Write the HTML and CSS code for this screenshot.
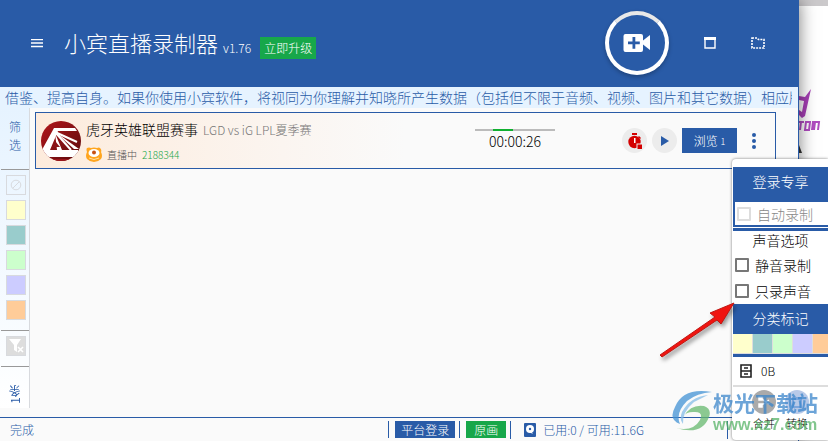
FILE: index.html
```html
<!DOCTYPE html>
<html lang="zh-CN">
<head>
<meta charset="utf-8">
<title>小宾直播录制器</title>
<link rel="stylesheet" href="styles.css">
</head>
<body>
<div class="desktop">
  <div class="window">
    <header class="header">
      <button class="icon-button" aria-label="菜单"><svg width="12" height="9" viewBox="0 0 12 9"><path d="M0 .5h12M0 4h12M0 7.500h12" stroke="#fff" stroke-width="1.500"/></svg></button>
      <h1 class="title">小宾直播录制器</h1>
      <span class="version">v1.76</span>
      <button class="upgrade">立即升级</button>
      <div class="window-tools">
        <button class="record" aria-label="添加录制"><svg width="28" height="20" viewBox="0 0 28 20"><path fill="#fff" fill-rule="evenodd" d="M2.500 1H18q2 0 2 2v4.500L27 2v15l-7-5.500V17q0 2-2 2H2.500q-2 0-2-2V3q0-2 2-2zM9.500 4v4.500H5v2.800h4.500v4.500h2.800v-4.500h4.500V8.500h-4.500V4z"/></svg></button>
        <button class="icon-button" aria-label="窗口"><svg width="12" height="12" viewBox="0 0 12 12"><path d="M1 1h10v10H1z" fill="none" stroke="#fff" stroke-width="1.400"/><path d="M0 0h12v3H0z" fill="#fff"/></svg></button>
        <button class="icon-button" aria-label="全屏"><svg width="14" height="12" viewBox="0 0 14 12"><path d="M1 1h5l1.500 1.500H13V11H1z" fill="none" stroke="#fff" stroke-width="1.600" stroke-dasharray="2 1"/></svg></button>
      </div>
    </header>
    <div class="notice"><p>借鉴、提高自身。如果你使用小宾软件，将视同为你理解并知晓所产生数据（包括但不限于音频、视频、图片和其它数据）相应版</p></div>
    <div class="content">
      <aside class="filters">
        <h2>筛<br>选</h2>
        <div class="filter-colors">
          <button class="swatch none" aria-label="无标记"><svg width="12" height="12" viewBox="0 0 12 12"><circle cx="6" cy="6" r="4.800"/><path d="M2.700 9.300l6.600-6.600"/></svg></button>
          <button class="swatch yellow" aria-label="黄色"></button>
          <button class="swatch teal" aria-label="青色"></button>
          <button class="swatch green" aria-label="绿色"></button>
          <button class="swatch violet" aria-label="紫色"></button>
          <button class="swatch orange" aria-label="橙色"></button>
        </div>
        <div class="filter-clear"><button class="swatch clear" aria-label="清除筛选"><svg width="16" height="16" viewBox="0 0 16 16"><path fill="#fff" d="M1 1h12L9 7v7l-3-2V7z"/><path d="M10 9l5 5m0-5l-5 5" stroke="#fff" stroke-width="1.600"/></svg></button></div>
        <span class="count">1条</span>
      </aside>
      <main class="streams">
        <article class="stream">
          <svg class="avatar" width="40" height="40" viewBox="0 0 40 40"><defs><clipPath id="round"><circle cx="20" cy="20" r="20"/></clipPath><linearGradient id="red" x2="1" y2="1"><stop stop-color="#b3161b"/><stop offset="1" stop-color="#5a0b0d"/></linearGradient></defs><g clip-path="url(#round)"><path d="M0 0h40v40H0z" fill="url(#red)"/><path d="M2 27L13 7h21l2 3H17L9 29h28v7H0v-6z" fill="#fff"/><path d="M13 10l25 18h-5zM14 12l7 17h-5z" fill="#fff"/><path d="M14 11l22 10M14 11l16 18" stroke="#fff" stroke-width="2"/><path d="M14 20l5 6h-7z" fill="#8a1418"/><path d="M10 38h20l-4 2H14z" fill="#9c151a"/></g></svg>
          <div class="stream-info">
            <p class="stream-name">虎牙英雄联盟赛事 <small>LGD vs iG LPL夏季赛</small></p>
            <p class="stream-state"><svg width="16" height="15" viewBox="0 0 16 15"><path d="M1 1q2-1 4 0 3-1 6 0 2-1 3 0 2 2 1 4 2 4 0 7-3 3-7 3T1 12Q-1 9 1 5 0 2 1 1z" fill="#ffa51f"/><ellipse cx="8" cy="6" rx="5.500" ry="4" fill="#fff"/><circle cx="8" cy="5.500" r="2" fill="#c75113"/><path d="M3 11q5 3 10 0" fill="none" stroke="#ffe0a0"/></svg><span>直播中</span><b>2188344</b></p>
          </div>
          <div class="timer"><div class="track"><i></i></div><time>00:00:26</time></div>
          <div class="stream-tools">
            <button class="round" aria-label="停止录制"><svg width="16" height="16" viewBox="0 0 16 16"><path d="M5 0h5v2H5z" fill="#d40000"/><circle cx="7.500" cy="9" r="6.200" fill="#d40000"/><path d="M12 3l2 2-1 1-2-2z" fill="#d40000"/><path d="M7 5h1.500v5H7z" fill="#fff"/><path d="M9.500 10.500H16V16H9.500z" fill="#ececec"/><path d="M10.500 11.500H15V16h-4.500z" fill="#d40000"/></svg></button>
            <button class="round" aria-label="播放"><svg width="8" height="10" viewBox="0 0 8 10"><path d="M0 0l8 5-8 5z" fill="#295ba7"/></svg></button>
            <button class="browse">浏览 <small>1</small></button>
            <button class="more" aria-label="更多"><svg width="4" height="16" viewBox="0 0 4 16"><g fill="#295ba7"><circle cx="2" cy="2" r="2"/><circle cx="2" cy="8" r="2"/><circle cx="2" cy="14" r="2"/></g></svg></button>
          </div>
        </article>
      </main>
    </div>
    <footer class="status">
      <span class="done">完成</span>
      <div class="status-cell"><button>平台登录</button></div>
      <div class="status-cell"><button class="quality">原画</button></div>
      <div class="status-cell disk"><svg width="12" height="14" viewBox="0 0 12 14"><rect width="12" height="14" rx="1" fill="#295ba7"/><circle cx="6" cy="6" r="4" fill="#fff"/><circle cx="6" cy="6" r="1.200" fill="#295ba7"/><path d="M6 7l3 4-4-2z" fill="#fff"/></svg><span>已用:0 / 可用:11.6G</span></div>
    </footer>
  </div>
  <div class="backdrop">
    <svg width="29" height="148" viewBox="0 6 29 148"><path d="M0 96l6 1 6-8-6 27-3 2-3-3v-5l3 2 2-11-5-1z" fill="#a63fb5"/><g fill="none" stroke="#b04cc0" stroke-width="2"><path d="M0 122h5m-3 0l-1 8M7 122h4l-1 8H6zM13 130l1-8h6l-1 8m-3-8l-1 8"/></g><path d="M0 145l3 8H0z" fill="#333"/></svg>
  </div>
</div>
<section class="menu">
  <h3>登录专享</h3>
  <label class="option locked"><input type="checkbox" disabled>自动录制</label>
  <h3 class="plain">声音选项</h3>
  <label class="option"><input type="checkbox">静音录制</label>
  <label class="option"><input type="checkbox">只录声音</label>
  <h3>分类标记</h3>
  <div class="palette"><button class="yellow" aria-label="黄色"></button><button class="teal" aria-label="青色"></button><button class="green" aria-label="绿色"></button><button class="violet" aria-label="紫色"></button><button class="orange" aria-label="橙色"></button></div>
  <div class="size"><svg width="12" height="14" viewBox="0 0 12 14"><path d="M1 1h10v12H1zM1 7h10M4 4h4M4 10h4" fill="none" stroke="#222" stroke-width="1.600"/></svg><span>0B</span></div>
  <div class="actions">
    <button><i><svg width="14" height="14" viewBox="0 0 14 14"><path d="M2 2h3v3H2zM2 9h3v3H2zM5 4l7 5M5 10l7-5" fill="#fff" stroke="#fff" stroke-width="1.500"/></svg></i>合并</button>
    <button><i class="convert"><svg width="14" height="14" viewBox="0 0 14 14"><path d="M3 4h8v8H3zM2 3h10" fill="none" stroke="#7ba5dc" stroke-width="2"/></svg></i>转换</button>
  </div>
</section>
<svg class="pointer" width="82" height="60" viewBox="0 0 82 60" aria-hidden="true"><path d="M1 53L56 15 51 11 75 1 62 22 58 18 3 55z" fill="#f01410" stroke="#bf1712"/></svg>
<div class="watermark">
  <svg width="42" height="44" viewBox="0 0 42 44"><path d="M42 3Q13-2 5 18-2 31 10 35 5 24 17 12 27 4 42 3z" fill="#4293d5"/><path d="M38 6Q20 8 12 23q-3 7 1 12-1-12 11-22z" fill="#85bde8"/><path d="M6 39q17 4 24-8 4-9-7-8-7 0-9 4 7-12 20-10 8 3 5 11-7 19-33 11z" fill="#67b96f"/></svg>
  <div><strong>极光下载站</strong><span>www.xz7.com</span></div>
</div>
</body>
</html>
```
FILE: styles.css
```css
* { box-sizing: border-box; }
body {
  margin: 0;
  overflow: hidden;
  font-family: "Noto Sans CJK SC", sans-serif;
  font-weight: 300;
  font-size: 14px;
  color: #000;
}
h1, h2, h3, p { margin: 0; font-weight: inherit; }
button { padding: 0; border: 0; background: none; font: inherit; color: inherit; }
svg { display: block; flex: none; }

.desktop { display: flex; height: 100vh; background: #fff; }
.window {
  position: relative;
  z-index: 1;
  flex: 1;
  min-width: 0;
  display: flex;
  flex-direction: column;
  background: #fafafa;
  border-right: 1px solid #295ba7;
  box-shadow: 0 0 16px #0008;
}
.backdrop { width: 29px; border-top: 6px solid #cbc9cb; }

.header {
  display: flex;
  align-items: center;
  height: 87px;
  padding: 0 33px 1px 31px;
  background: #295ba7;
  color: #fff;
}
.title { margin-left: 21px; font-size: 22px; line-height: 30px; padding-bottom: 2px; }
.version { margin: 10px 9px 0 5px; font-size: 12px; line-height: 16px; }
.upgrade { margin-top: 10px; height: 22px; padding: 0 4px; background: #17a74a; font-size: 12px; line-height: 22px; }
.window-tools { display: flex; align-items: center; gap: 35px; margin-left: auto; }
.record {
  display: grid;
  place-items: center;
  width: 64px;
  height: 64px;
  border: 4px solid #fff;
  border-top-color: #e8e8e8;
  border-radius: 50%;
  box-shadow: 0 2px 4px #0004;
}

.notice { padding: 0 6px 0 5px; height: 21px; background: #e6f3ff; color: #295ba7; line-height: 20px; }
.notice p { overflow: hidden; white-space: nowrap; }

.content { flex: 1; min-height: 0; display: flex; }
.filters {
  display: flex;
  flex-direction: column;
  width: 30px;
  height: 300px;
  padding-left: 1px;
  border-right: 1px solid #d8dade;
  background: linear-gradient(#e6f3ff, #fff);
  color: #295ba7;
}
.filters h2 { height: 61px; padding-top: 10px; font-size: 12px; line-height: 18px; text-align: center; }
.filter-colors {
  display: grid;
  gap: 5px;
  justify-content: end;
  padding: 5px 3px 10px 0;
  border-top: 1px solid #999;
  border-bottom: 1px solid #999;
}
.swatch { display: grid; place-items: center; width: 20px; height: 20px; border: 1px solid #d8dade; }
.none svg { fill: none; stroke: #d8dade; }
.yellow { background: #ffc; }
.teal { background: #9cc; }
.green { background: #cfc; }
.violet { background: #ccf; }
.orange { background: #fc9; }
.filter-clear { display: grid; justify-content: end; padding: 5px 3px 10px 0; border-bottom: 1px solid #999; }
.clear { background: #ddd; }
.count { margin: auto auto 4px; font-size: 12px; font-weight: 400; line-height: 16px; writing-mode: vertical-rl; transform: rotate(180deg); }

.streams { flex: 1; min-width: 0; padding: 4px 22px 0 5px; }
.stream {
  display: flex;
  align-items: center;
  height: 57px;
  padding: 0 19px 0 5px;
  border: 1px solid #295ba7;
  background: linear-gradient(90deg, #fdebdc, #fafafa 50%);
}
.stream-info { flex: 1; padding-left: 5px; }
.stream-name { line-height: 22px; }
.stream-name small { margin-left: 2px; font-size: 12px; color: #777; }
.stream-state { display: flex; align-items: center; gap: 5px; margin-top: 5px; font-size: 10px; line-height: 18px; color: #555; }
.stream-state b { font-weight: inherit; color: #17a74a; }
.timer { width: 80px; margin-right: 67px; padding-bottom: 2px; text-align: center; line-height: 20px; }
.track { height: 2px; background: #bbb; }
.track i { display: block; width: 20px; height: 2px; margin-left: 18px; background: #10b030; }
.stream-tools { display: flex; align-items: center; gap: 5px; }
.round { display: grid; place-items: center; width: 25px; height: 25px; border-radius: 50%; background: #ececec; }
.browse { width: 55px; height: 25px; background: #295ba7; color: #fff; font-size: 12px; line-height: 25px; }
.browse small { font-size: 9px; vertical-align: 1px; }
.more { margin-left: 10px; }

.status {
  display: flex;
  align-items: center;
  height: 24px;
  padding: 0 173px 0 10px;
  border-top: 1px solid #295ba7;
  color: #295ba7;
  font-size: 12px;
  line-height: 18px;
}
.done { margin-right: auto; }
.status-cell { padding: 0 4px 0 6px; border-left: 1px solid #295ba7; }
.status-cell button { display: block; height: 17px; padding: 0 6px; background: #295ba7; color: #fff; line-height: 17px; }
.status-cell .quality { padding: 0 8px; background: #17a74a; }
.disk { display: flex; align-items: center; gap: 7px; padding: 0 83px 0 13px; border-right: 1px solid #295ba7; margin-right: -103px; }

.menu {
  position: absolute;
  z-index: 2;
  top: 159px;
  right: 0;
  width: 96px;
  padding: 8px 0 0 1px;
  border-radius: 4px 0 0 4px;
  background: #fff;
  box-shadow: 0 0 3px #0008;
}
.menu h3 { height: 30px; background: #295ba7; color: #fff; font-size: 14px; line-height: 28px; text-align: center; }
.menu .plain { height: 24px; border-top: 3px solid #295ba7; background: none; color: #000; line-height: 18px; }
.option { display: flex; align-items: center; gap: 6px; height: 26px; padding-left: 2px; white-space: nowrap; line-height: 20px; }
.option input { appearance: none; flex: none; width: 14px; height: 14px; margin: 0; border: 2px solid #777; border-radius: 1px; }
.menu .locked { height: 30px; margin-bottom: 1px; border: solid #295ba7; border-width: 5px 0 2px 2px; color: #888; }
.locked input { border-color: #ddd; }
.palette { display: grid; grid-template-columns: repeat(5, 20px); gap: 0; overflow: hidden; height: 23px; border-bottom: 3px solid #295ba7; }
.palette button { border: solid #ddd; border-width: 0 1px 1px 0; }
.size { display: flex; align-items: center; gap: 9px; height: 30px; padding-left: 7px; border-bottom: 2px solid #ddd; font-size: 12px; line-height: 28px; }
.actions { display: flex; justify-content: center; gap: 9px; padding-top: 3px; height: 53px; font-size: 11px; line-height: 18px; }
.actions button { display: grid; justify-items: center; align-content: start; }
.actions i { display: grid; place-items: center; width: 24px; height: 24px; border-radius: 50%; background: #aaa; }
.actions .convert { background: #b8c9e8; }

.pointer { position: absolute; z-index: 3; right: 87px; top: 302px; filter: drop-shadow(2px 3px 2px #0006); }
.watermark { position: absolute; z-index: 4; right: 10px; top: 389px; display: flex; gap: 1px; opacity: .75; pointer-events: none; }
.watermark strong { display: block; font-size: 21px; font-weight: 700; line-height: 26px; color: #3c86cb; }
.watermark span { display: block; font: 700 16px/20px "Liberation Sans", sans-serif; color: #58b368; }
```
